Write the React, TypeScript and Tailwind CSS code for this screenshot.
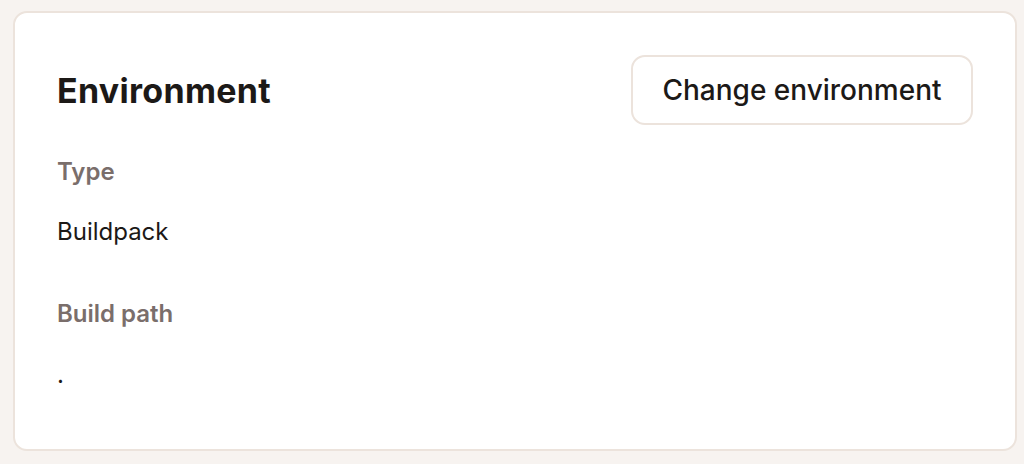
export default function App() {
  return (
    <div className="w-[1024px] h-[464px] bg-[#f7f3f0] pt-[11px] pl-[13px] font-['Inter',sans-serif]">
      <div className="w-[1004px] h-[440px] bg-white border-2 border-[#ece3dc] rounded-[14px] px-[42px] pt-[42px]">
        <div className="flex items-start justify-between">
          <h2 className="mt-[16px] text-[34px] leading-[40px] tracking-[0.3px] font-bold text-[#1c1917]">Environment</h2>
          <button className="h-[70px] w-[342px] border-2 border-[#ece3dc] rounded-[14px] text-[28px] font-medium text-[#1c1917]">
            Change environment
          </button>
        </div>
        <div className="mt-[31px] text-[24px] leading-[32px] font-semibold text-[#7a6e6b]">Type</div>
        <div className="mt-[28px] text-[24px] leading-[32px] text-[#1c1917]">Buildpack</div>
        <div className="mt-[50px] text-[24px] leading-[32px] font-semibold text-[#7a6e6b]">Build path</div>
        <div className="mt-[29px] text-[24px] leading-[32px] text-[#1c1917]">.</div>
      </div>
    </div>
  );
}
